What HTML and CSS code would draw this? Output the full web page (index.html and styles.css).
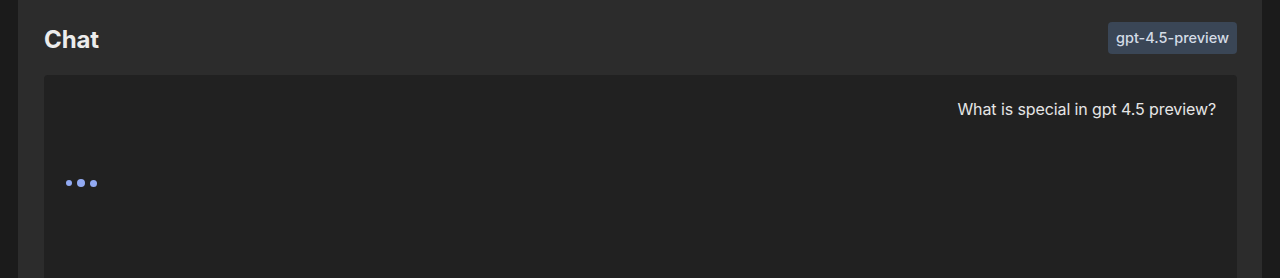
FILE: index.html
```html
<!DOCTYPE html>
<html lang="en">
<head>
    <meta charset="UTF-8">
    <meta name="viewport" content="width=device-width, initial-scale=1.0">
    <title>chat</title>
    <link rel="stylesheet" href="styles.css">
</head>
<body>
    <div id="page">
        <div id="panel">
            <div class="header">
                <h1 class="title">Chat</h1>
                <span class="model">gpt-4.5-preview</span>
            </div>
            <div id="messages">
                <div class="msg user">What is special in gpt 4.5 preview?</div>
                <div class="msg bot">
                    <div class="typing">
                        <span class="dot dot1"></span>
                        <span class="dot dot2"></span>
                        <span class="dot dot3"></span>
                    </div>
                </div>
            </div>
        </div>
    </div>
</body>
</html>
```

FILE: styles.css
```css
body{
    margin: 0;
    background-color: #1b1b1b;
    font-family: Inter, "Liberation Sans", sans-serif;
    color: #e4e4e4;
}
#page{
    padding: 0 18px;
    height: 278px;
    overflow: hidden;
}
#panel{
    background-color: #2c2c2c;
    padding: 22px 25px 0 26px;
    height: 400px;
}
.header{
    display: flex;
    justify-content: space-between;
    align-items: center;
    height: 32px;
    margin-bottom: 21px;
}
.title{
    margin: 0;
    margin-top: 2px;
    font-size: 24px;
    font-weight: 700;
    color: #ececec;
    letter-spacing: -0.1px;
}
.model{
    background-color: #3a4656;
    color: #d4dce6;
    font-size: 14.5px;
    font-weight: 500;
    padding: 0 8px;
    height: 32px;
    line-height: 32px;
    border-radius: 4px;
}
#messages{
    background-color: #212121;
    border-radius: 4px;
    padding: 22px 21px 0 21px;
    height: 300px;
}
.msg{
    font-size: 16px;
    line-height: 24px;
}
.user{
    text-align: right;
    color: #e6e6e6;
    letter-spacing: -0.1px;
}
.bot{
    margin-top: 50px;
    padding-left: 1px;
}
.typing{
    display: flex;
    align-items: center;
    gap: 5px;
    height: 24px;
}
.dot{
    display: block;
    border-radius: 50%;
    background-color: #92aaf2;
}
.dot1{
    width: 6px;
    height: 6px;
}
.dot2{
    width: 8px;
    height: 8px;
}
.dot3{
    width: 7px;
    height: 7px;
}
```
